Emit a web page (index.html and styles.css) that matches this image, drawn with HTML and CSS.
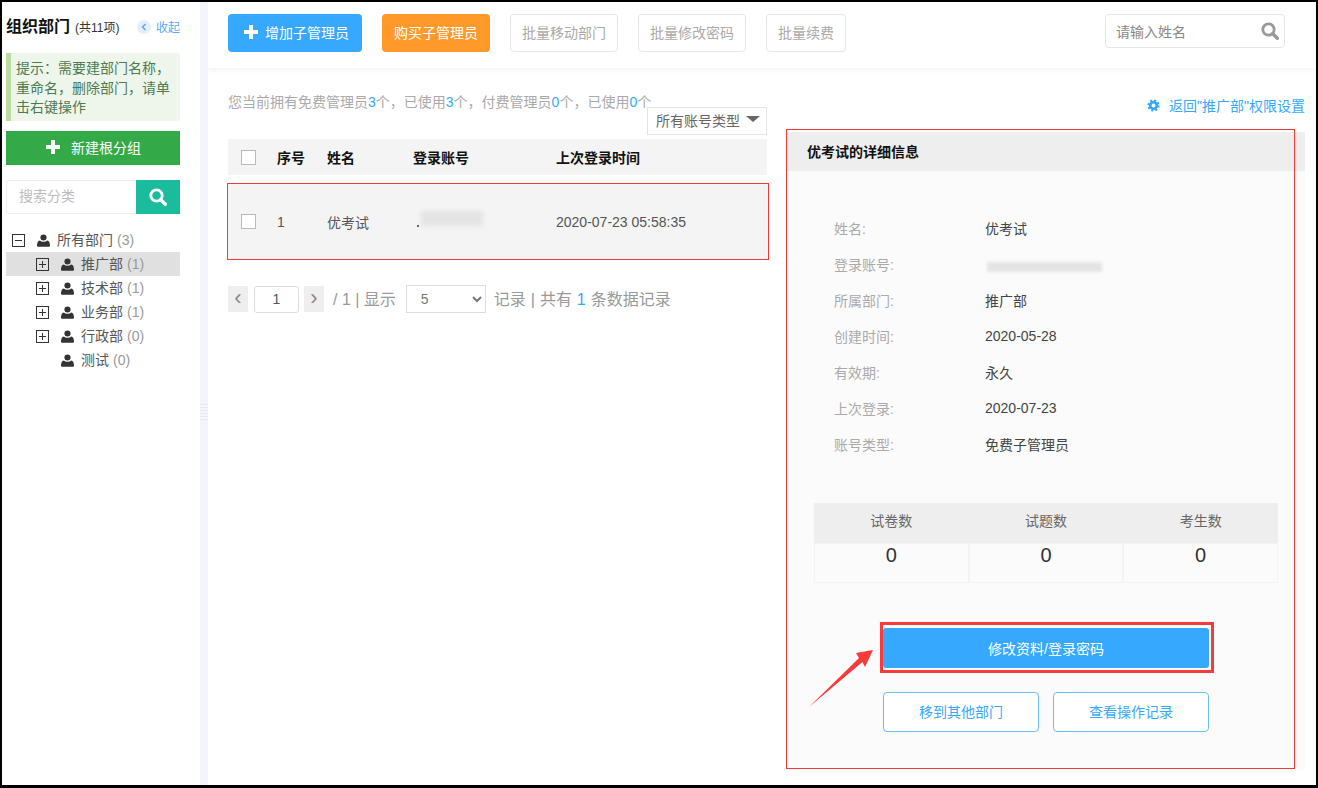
FILE: index.html
```html
<!DOCTYPE html>
<html lang="zh-CN">
<head>
    <meta charset="UTF-8">
    <title>组织部门</title>
    <link rel="stylesheet" href="styles.css">
</head>

<body>
  <div class="frame">
    <svg width="0" height="0" class="defs">
      <defs>
        <symbol id="i-user" viewBox="0 0 14 14">
          <circle cx="7" cy="3.8" r="3.3"/>
          <path d="M1 13.6c-.6 0-1-.4-1-1 0-2.8.8-5.400 3-5.700 1 .9 2.500 1.400 4 1.400s3-.5 4-1.400c2.200.3 3 2.900 3 5.700 0 .6-.4 1-1 1z"/>
        </symbol>
        <symbol id="i-search" viewBox="0 0 18 18">
          <circle cx="7.500" cy="7.500" r="5.700" fill="none" stroke="currentColor" stroke-width="2.800"/>
          <path d="M11.800 11.800l4.500 4.500" fill="none" stroke="currentColor" stroke-width="3.400" stroke-linecap="round"/>
        </symbol>
        <symbol id="i-plus" viewBox="0 0 16 16">
          <path d="M6 1h4v5h5v4h-5v5H6v-5H1V6h5z"/>
        </symbol>
      </defs>
    </svg>

    <aside class="sidebar">
      <div class="side-head">
        <h1>组织部门</h1>
        <span class="side-count">(共11项)</span>
        <a class="collapse">
          <svg class="collapse-dot" viewBox="0 0 14 14">
            <circle cx="7" cy="7" r="7" fill="#e6edfb"/>
            <path d="M8.500 4L5.500 7l3 3" fill="none" stroke="#5aa9f5" stroke-width="1.500"/>
          </svg>收起</a>
      </div>
      <div class="tip">提示：需要建部门名称，重命名，删除部门，请单击右键操作</div>
      <button class="new-root"><svg class="ico-plus"><use href="#i-plus"/></svg>新建根分组</button>
      <div class="side-search">
        <div class="side-search-input">搜索分类</div>
        <div class="side-search-btn"><svg class="ico-search"><use href="#i-search"/></svg></div>
      </div>
      <ul class="tree">
        <li class="tree-row"><span class="toggle minus"></span><svg class="ico-user"><use href="#i-user"/></svg><span>所有部门</span> <em>(3)</em></li>
        <li class="tree-row sub active"><span class="toggle plus"></span><svg class="ico-user"><use href="#i-user"/></svg><span>推广部</span> <em>(1)</em></li>
        <li class="tree-row sub"><span class="toggle plus"></span><svg class="ico-user"><use href="#i-user"/></svg><span>技术部</span> <em>(1)</em></li>
        <li class="tree-row sub"><span class="toggle plus"></span><svg class="ico-user"><use href="#i-user"/></svg><span>业务部</span> <em>(1)</em></li>
        <li class="tree-row sub"><span class="toggle plus"></span><svg class="ico-user"><use href="#i-user"/></svg><span>行政部</span> <em>(0)</em></li>
        <li class="tree-row sub"><span class="toggle none"></span><svg class="ico-user"><use href="#i-user"/></svg><span>测试</span> <em>(0)</em></li>
      </ul>
    </aside>

    <div class="gutter"><span class="gutter-grip"></span></div>

    <main class="main">
      <div class="topbar">
        <button class="btn btn-blue"><svg class="ico-plus"><use href="#i-plus"/></svg>增加子管理员</button>
        <button class="btn btn-orange">购买子管理员</button>
        <button class="btn btn-line">批量移动部门</button>
        <button class="btn btn-line">批量修改密码</button>
        <button class="btn btn-line">批量续费</button>
        <div class="top-search">
          <span>请输入姓名</span>
          <svg class="ico-search"><use href="#i-search"/></svg>
        </div>
      </div>

      <div class="content">
        <section class="list">
          <p class="notice">您当前拥有免费管理员<b>3</b>个，已使用<b>3</b>个，付费管理员<b>0</b>个，已使用<b>0</b>个</p>
          <div class="filter-row">
            <div class="filter">所有账号类型<i class="caret"></i></div>
          </div>
          <div class="grid-row grid-head">
            <span class="check"></span><span>序号</span><span>姓名</span><span>登录账号</span><span>上次登录时间</span>
          </div>
          <div class="grid-row grid-item">
            <span class="check"></span><span>1</span><span>优考试</span><span class="blur-cell"><i class="blur-a"></i><i class="blur-dot"></i></span><span>2020-07-23 05:58:35</span>
          </div>
          <div class="pager">
            <span class="page-arrow">‹</span>
            <span class="page-input">1</span>
            <span class="page-arrow">›</span>
            <span class="page-text">/ 1 | 显示</span>
            <select class="page-size"><option>5</option></select>
            <span class="page-text">记录 | 共有 <b>1</b> 条数据记录</span>
          </div>
        </section>

        <section class="detail">
          <a class="back-link">
            <svg class="ico-cog" viewBox="0 0 14 14">
              <circle cx="7" cy="7" r="3.600" fill="none" stroke="currentColor" stroke-width="3"/>
              <circle cx="7" cy="7" r="5.500" fill="none" stroke="currentColor" stroke-width="2.200" stroke-dasharray="2.160 2.160"/>
            </svg>返回"推广部"权限设置</a>
          <div class="panel">
            <h2 class="panel-title">优考试的详细信息</h2>
            <dl class="info">
              <div class="info-row"><dt>姓名:</dt><dd>优考试</dd></div>
              <div class="info-row"><dt>登录账号:</dt><dd class="blur-cell"><i class="blur-b"></i></dd></div>
              <div class="info-row"><dt>所属部门:</dt><dd>推广部</dd></div>
              <div class="info-row"><dt>创建时间:</dt><dd>2020-05-28</dd></div>
              <div class="info-row"><dt>有效期:</dt><dd>永久</dd></div>
              <div class="info-row"><dt>上次登录:</dt><dd>2020-07-23</dd></div>
              <div class="info-row"><dt>账号类型:</dt><dd>免费子管理员</dd></div>
            </dl>
            <div class="stats">
              <div class="stat-head">试卷数</div>
              <div class="stat-head">试题数</div>
              <div class="stat-head">考生数</div>
              <div class="stat-val">0</div>
              <div class="stat-val">0</div>
              <div class="stat-val">0</div>
            </div>
            <div class="actions">
              <button class="act-main">修改资料/登录密码</button>
              <div class="act-row">
                <button class="act-line">移到其他部门</button>
                <button class="act-line">查看操作记录</button>
              </div>
            </div>
          </div>
        </section>
      </div>
    </main>

    <!-- red marks drawn on top of the screenshot -->
    <div class="mark mark-row"></div>
    <div class="mark mark-panel"></div>
    <div class="mark mark-btn"></div>
    <svg class="mark-arrow" width="70" height="64" viewBox="0 0 70 64">
      <path d="M1 61 L51 12 L48 7 L65 4 L57 21 L54.500 16 Z" fill="#f73a3a"/>
    </svg>
  </div>
</body>
</html>
```

FILE: styles.css
```css
* {
    box-sizing: border-box;
}
html, body {
    margin: 0;
    padding: 0;
}
body {
    font-family: "Liberation Sans", "Noto Sans CJK SC", sans-serif;
    font-size: 14px;
    color: #333;
    background: #fff;
}
button {
    font-family: inherit;
    cursor: pointer;
}
.defs {
    position: absolute;
}
.frame {
    position: relative;
    display: flex;
    width: 1318px;
    height: 788px;
    border: 2px solid #000;
    border-bottom-width: 3px;
    overflow: hidden;
    background: #fff;
}

/* sidebar */
.sidebar {
    width: 198px;
    flex: none;
    padding: 0 20px 0 4px;
}
.side-head {
    display: flex;
    align-items: center;
    height: 49px;
    margin-bottom: 2px;
    white-space: nowrap;
}
.side-head h1 {
    margin: 0;
    font-size: 16px;
    line-height: 20px;
    font-weight: bold;
    color: #111;
}
.side-count {
    margin-left: 5px;
    font-size: 12px;
}
.collapse {
    display: flex;
    align-items: center;
    margin-left: auto;
    font-size: 12px;
    color: #5aa9f5;
}
.collapse-dot {
    width: 14px;
    height: 14px;
    margin-right: 5px;
}
.tip {
    height: 68px;
    padding: 6px 8px 0 5px;
    border-left: 5px solid #bcdba1;
    border-radius: 0 3px 3px 0;
    background: #eef6ec;
    color: #4d7a50;
    font-size: 14px;
    line-height: 19.500px;
}
.new-root {
    display: flex;
    align-items: center;
    justify-content: center;
    width: 100%;
    height: 34px;
    margin-top: 10px;
    padding: 0 0 2px;
    border: 0;
    background: #34a948;
    color: #fff;
    font-size: 14px;
}
.ico-plus {
    width: 16px;
    height: 16px;
    margin-right: 10px;
    fill: #fff;
}
.side-search {
    display: flex;
    height: 34px;
    margin-top: 15px;
}
.side-search-input {
    flex: 1;
    padding-left: 12px;
    border: 1px solid #eee;
    border-right: 0;
    border-radius: 3px 0 0 3px;
    color: #bbb;
    font-size: 14px;
    line-height: 31px;
}
.side-search-btn {
    display: flex;
    align-items: center;
    justify-content: center;
    width: 44px;
    background: #1abc9c;
    color: #fff;
}
.ico-search {
    width: 18px;
    height: 18px;
}
.tree {
    margin: 14px 0 0;
    padding: 0;
    list-style: none;
}
.tree-row {
    display: flex;
    align-items: center;
    height: 24px;
    padding-left: 6px;
    color: #555;
    font-size: 14px;
    white-space: nowrap;
}
.tree-row span:not(.toggle) {
    margin-top: -2px;
}
.tree-row.sub {
    padding-left: 30px;
}
.tree-row.active {
    background: #e0e0e0;
}
.tree-row em {
    margin-left: 4px;
    margin-top: -1px;
    color: #999;
    font-style: normal;
}
.toggle {
    position: relative;
    width: 13px;
    height: 13px;
    flex: none;
    border: 1px solid #333;
}
.toggle.none {
    border: 0;
}
.toggle.minus::before,
.toggle.plus::before {
    content: "";
    position: absolute;
    left: 2px;
    top: 5px;
    width: 7px;
    height: 1px;
    background: #333;
}
.toggle.plus::after {
    content: "";
    position: absolute;
    left: 5px;
    top: 2px;
    width: 1px;
    height: 7px;
    background: #333;
}
.ico-user {
    width: 13px;
    height: 13px;
    flex: none;
    margin: 0 7px 0 12px;
    fill: #333;
}

.gutter {
    position: relative;
    width: 8px;
    flex: none;
    background: #f4f5fb;
}
.gutter-grip {
    position: absolute;
    left: 0;
    top: 400px;
    width: 8px;
    height: 18px;
    background: repeating-linear-gradient(#f4f5fb 0 2px, #e8e9ef 2px 3px);
}

/* main */
.main {
    flex: 1;
    min-width: 0;
}
.topbar {
    display: flex;
    align-items: flex-start;
    height: 66px;
    padding: 12px 31px 0 20px;
    box-shadow: 0 2px 6px rgba(0, 0, 0, 0.05);
}
.btn {
    display: flex;
    align-items: center;
    height: 38px;
    margin-right: 20px;
    padding: 0 11px 2px;
    border: 1px solid #e6e6e6;
    border-radius: 4px;
    background: #fff;
    color: #aaa;
    font-size: 14px;
    white-space: nowrap;
}
.btn-blue {
    width: 134px;
    padding: 0 0 2px 15px;
    border: 0;
    background: #36a9fe;
    color: #fff;
}
.btn-blue .ico-plus {
    margin-right: 6px;
}
.btn-orange {
    width: 108px;
    justify-content: center;
    margin-right: 20px;
    padding: 0 0 2px;
    border: 0;
    background: #ff9a2a;
    color: #fff;
}
.top-search {
    display: flex;
    align-items: center;
    justify-content: space-between;
    width: 180px;
    height: 34px;
    margin-left: auto;
    padding: 0 5px 0 10px;
    border: 1px solid #e6e6e6;
    border-radius: 4px;
    color: #888;
    font-size: 14px;
}
.top-search .ico-search {
    color: #999;
}
.content {
    display: flex;
    padding: 0 11px 0 20px;
}
.list {
    width: 539px;
    flex: none;
    padding-top: 25px;
}
.notice {
    margin: 0;
    height: 19px;
    color: #aaa;
    font-size: 14px;
    line-height: 18px;
    white-space: nowrap;
}
.notice b,
.page-text b {
    color: #36a9fe;
    font-weight: normal;
}
.filter-row {
    display: flex;
    justify-content: flex-end;
    margin-top: -5px;
}
.filter {
    display: flex;
    align-items: center;
    height: 28px;
    width: 120px;
    padding: 0 0 2px 8px;
    border: 1px solid #e4e4e4;
    color: #666;
    font-size: 14px;
}
.caret {
    width: 0;
    height: 0;
    margin-left: 6px;
    margin-top: -3px;
    border: 7px solid transparent;
    border-top: 6px solid #666;
    border-bottom: 0;
}
.grid-row {
    display: grid;
    grid-template-columns: 36px 50px 86px 143px 1fr;
    align-items: center;
    padding-left: 13px;
    white-space: nowrap;
}
.grid-head {
    height: 36px;
    margin-top: 4px;
    background: #f4f4f4;
    color: #111;
    font-size: 14px;
    font-weight: bold;
}
.grid-item {
    height: 75px;
    margin-top: 9px;
    background: #f4f4f4;
    color: #555;
    font-size: 14px;
}
.check {
    width: 15px;
    height: 15px;
    border: 1px solid #bbb;
    background: #fff;
}
.blur-cell {
    position: relative;
    display: block;
    height: 16px;
}
.blur-a {
    position: absolute;
    left: 8px;
    top: -3px;
    width: 62px;
    height: 15px;
    background: #e4e4e4;
    filter: blur(2px);
}
.blur-dot {
    position: absolute;
    left: 4px;
    top: 11px;
    width: 2px;
    height: 2px;
    background: #666;
}
.blur-b {
    position: absolute;
    left: 2px;
    top: 6px;
    width: 115px;
    height: 10px;
    background: #e4e4e4;
    filter: blur(1.500px);
}
.pager {
    display: flex;
    align-items: center;
    height: 28px;
    margin-top: 26px;
    color: #999;
    font-size: 16px;
    white-space: nowrap;
}
.page-arrow {
    width: 20px;
    height: 26px;
    background: #eee;
    color: #888;
    font-size: 22px;
    line-height: 23px;
    text-align: center;
}
.page-input {
    width: 45px;
    height: 27px;
    margin: 0 5px 0 6px;
    border: 1px solid #ddd;
    border-radius: 3px;
    color: #555;
    font-size: 14px;
    line-height: 25px;
    text-align: center;
}
.page-text {
    margin-left: 9px;
    margin-top: -2px;
}
.page-size {
    width: 80px;
    height: 28px;
    margin-left: 10px;
    padding-left: 10px;
    border: 1px solid #ddd;
    background: #fff;
    color: #777;
    font-family: inherit;
    font-size: 14px;
}
.page-size + .page-text {
    margin-left: 8px;
    word-spacing: 0.500px;
}

/* detail panel */
.detail {
    width: 518px;
    flex: none;
    margin-left: 20px;
}
.back-link {
    display: flex;
    align-items: center;
    justify-content: flex-end;
    height: 20px;
    margin-top: 27px;
    color: #36a9fe;
    font-size: 14px;
    white-space: nowrap;
}
.ico-cog {
    width: 13px;
    height: 13px;
    margin-right: 9px;
}
.panel {
    height: 639px;
    margin-top: 17px;
    background: #fbfbfb;
}
.panel-title {
    height: 39px;
    margin: 0;
    padding-left: 20px;
    background: #eeeeee;
    color: #111;
    font-size: 14px;
    font-weight: bold;
    line-height: 41px;
}
.info {
    margin: 39px 0 0;
    padding-left: 47px;
}
.info-row {
    display: flex;
    align-items: center;
    height: 36px;
}
.info-row dt {
    width: 151px;
    color: #aaa;
    font-size: 14px;
}
.info-row dd {
    margin: 0;
    color: #444;
    font-size: 14px;
}
.stats {
    display: grid;
    grid-template-columns: repeat(3, 1fr);
    width: 464px;
    margin: 41px 0 0 27px;
}
.stat-head {
    height: 40px;
    background: #eeeeee;
    color: #666;
    font-size: 14px;
    line-height: 37px;
    text-align: center;
}
.stat-val {
    height: 40px;
    border: 1px solid #f3f3f3;
    color: #333;
    font-size: 20px;
    line-height: 22px;
    text-align: center;
}
.actions {
    margin: 45px 0 0 96px;
    width: 326px;
}
.act-main {
    display: block;
    width: 100%;
    height: 40px;
    padding-bottom: 2px;
    border: 0;
    border-radius: 3px;
    background: #36a9fe;
    color: #fff;
    font-size: 14px;
}
.act-row {
    display: flex;
    justify-content: space-between;
    margin-top: 24px;
}
.act-line {
    width: 156px;
    height: 40px;
    padding-bottom: 3px;
    border: 1px solid #6cbcf8;
    border-radius: 4px;
    background: #fff;
    color: #36a9fe;
    font-size: 14px;
}

/* red annotations over the page */
.mark {
    position: absolute;
    border: 1px solid #f03a3a;
}
.mark-row {
    left: 225px;
    top: 181px;
    width: 542px;
    height: 77px;
}
.mark-panel {
    left: 784px;
    top: 127px;
    width: 509px;
    height: 640px;
}
.mark-btn {
    left: 878px;
    top: 620px;
    width: 334px;
    height: 51px;
    border: 3px solid #f73a3a;
}
.mark-arrow {
    position: absolute;
    left: 806px;
    top: 644px;
}
```
